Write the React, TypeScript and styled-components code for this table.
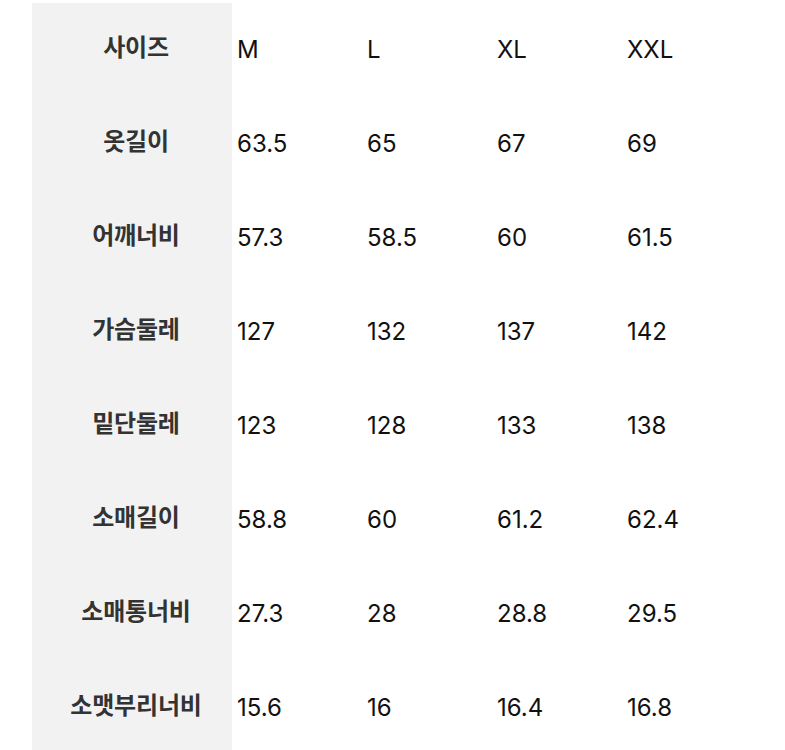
import React from "react";
import styled, { createGlobalStyle } from "styled-components";

const GlobalStyle = createGlobalStyle`
  html, body { margin: 0; padding: 0; background: #ffffff; }
  body { font-family: Inter, "Noto Sans CJK KR", sans-serif; }
`;

const Page = styled.div`
  padding: 3px 0 0 32px;
  height: 747px;
  overflow: hidden;
`;

const Table = styled.div`
  display: grid;
  grid-template-columns: 200px repeat(4, 130px);
  grid-auto-rows: 94px;
`;

const Label = styled.div`
  background: #f2f2f2;
  display: flex;
  align-items: center;
  justify-content: center;
  padding-left: 8px;
  padding-bottom: 8px;
  font-family: "Noto Sans CJK KR", sans-serif;
  font-weight: 700;
  font-size: 24px;
  line-height: 1;
  color: #333333;
  letter-spacing: -0.2px;
`;

const Cell = styled.div`
  display: flex;
  align-items: center;
  padding-left: 5px;
  padding-bottom: 2px;
  font-family: Inter, "Liberation Sans", sans-serif;
  font-size: 24px;
  font-weight: 400;
  color: #111111;
`;

const rows: [string, string[]][] = [
  ["사이즈", ["M", "L", "XL", "XXL"]],
  ["옷길이", ["63.5", "65", "67", "69"]],
  ["어깨너비", ["57.3", "58.5", "60", "61.5"]],
  ["가슴둘레", ["127", "132", "137", "142"]],
  ["밑단둘레", ["123", "128", "133", "138"]],
  ["소매길이", ["58.8", "60", "61.2", "62.4"]],
  ["소매통너비", ["27.3", "28", "28.8", "29.5"]],
  ["소맷부리너비", ["15.6", "16", "16.4", "16.8"]],
];

export default function App() {
  return (
    <>
      <GlobalStyle />
      <Page>
        <Table>
          {rows.map(([label, vals]) => (
            <React.Fragment key={label}>
              <Label>{label}</Label>
              {vals.map((v, i) => (
                <Cell key={i}>{v}</Cell>
              ))}
            </React.Fragment>
          ))}
        </Table>
      </Page>
    </>
  );
}
